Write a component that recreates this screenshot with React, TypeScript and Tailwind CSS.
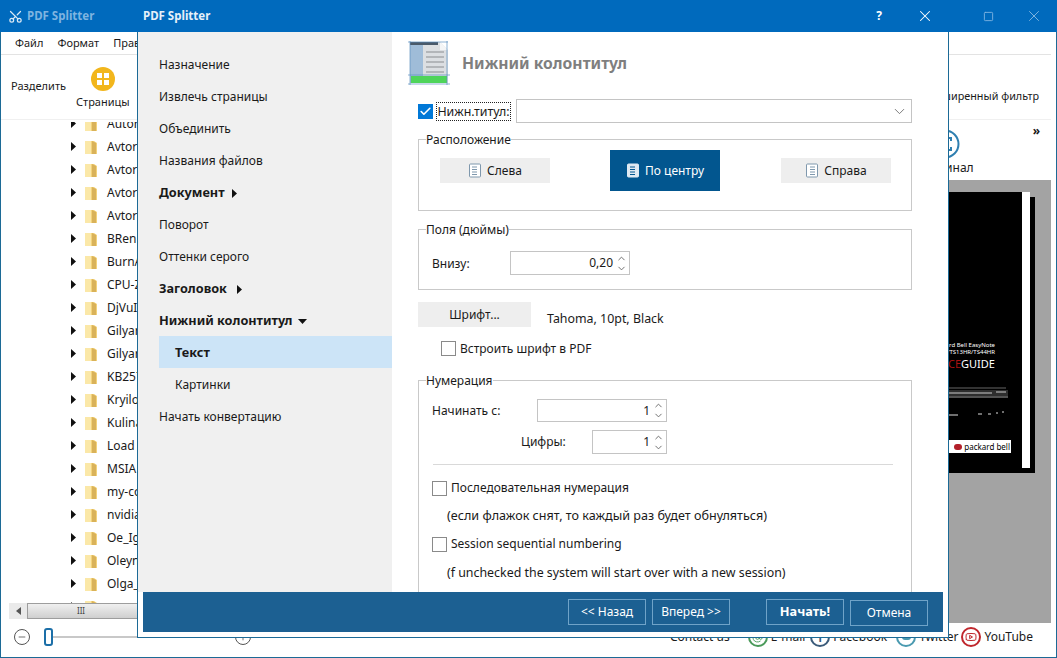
import { ChevronDown, ChevronUp, Check, Scissors, X, Square, Minus, Plus, AtSign, Youtube } from 'lucide-react';

const navTop = ['Назначение', 'Извлечь страницы', 'Объединить', 'Названия файлов'];
const treeRows = ['Autor', 'Avtor', 'Avtor', 'Avtor', 'Avtor', 'BRen', 'BurnA', 'CPU-Z', 'DjVuI', 'Gilyar', 'Gilyar', 'KB257', 'Kryilo', 'Kulina', 'Load', 'MSIA', 'my-co', 'nvidia', 'Oe_Ig', 'Oleyn', 'Olga_', ''];

const Arrow = ({ down = false }: { down?: boolean }) => (
  <svg width="9" height="11" viewBox="0 0 9 11" className={down ? 'shrink-0 rotate-90' : 'shrink-0'}>
    <path d="M2 1l5 4.5L2 10z" fill="#111" />
  </svg>
);

const Folder = () => (
  <svg width="14" height="16" viewBox="0 0 14 16" className="shrink-0">
    <path d="M1 2h9l3 2v11H1z" fill="#f3d27a" />
    <path d="M8 2l4 2v11H8z" fill="#d9b25a" />
    <path d="M1 2h6v13H1z" fill="#fbe8a8" />
  </svg>
);

const DocIcon = ({ light = false, align = 'left' }: { light?: boolean; align?: string }) => {
  const fill = light ? '#dfe9f2' : '#fff';
  const stroke = light ? '#dfe9f2' : '#7f98ad';
  const line = light ? '#02568f' : '#7f98ad';
  const x = align === 'right' ? 5 : 4;
  return (
    <svg width="14" height="15" viewBox="0 0 14 15">
      <rect x="1.5" y="1" width="11" height="13" rx="1" fill={fill} stroke={stroke} />
      <path d={`M${x} 4h5M${x} 6.5h5M${x} 9h5M${x} 11.5h5`} stroke={line} />
    </svg>
  );
};

const CheckBox = ({ checked = false }: { checked?: boolean }) =>
  checked ? (
    <span className="flex h-[15px] w-[15px] items-center justify-center bg-[#0078d7]">
      <Check size={13} color="#fff" strokeWidth={3} />
    </span>
  ) : (
    <span className="block h-[15px] w-[15px] border border-[#8a8a8a] bg-white" />
  );

const Spinner = ({ value, className }: { value: string; className: string }) => (
  <div className={`flex items-center justify-end border border-[#c4c4c4] bg-white pr-[2px] ${className}`}>
    <span>{value}</span>
    <span className="ml-[3px] flex flex-col text-[#666]">
      <ChevronUp size={11} className="-mb-[1px]" />
      <ChevronDown size={11} />
    </span>
  </div>
);

const PosButton = ({ label, active = false, align, className = '' }: { label: string; active?: boolean; align: string; className?: string }) => (
  <button className={`${active ? 'flex h-[41px] w-[110px] items-center justify-center gap-[5px] bg-[#02568f] text-white' : 'flex h-[25px] w-[110px] items-center justify-center gap-[5px] bg-[#eeeeee]'} ${className}`}>
    <DocIcon light={active} align={align} />
    {label}
  </button>
);

const BarButton = ({ label, bold = false, low = false }: { label: string; bold?: boolean; low?: boolean }) => (
  <button className={`h-[26px] w-[78px] border border-[#6fa3c8] text-white ${bold ? 'text-[12.7px] font-bold' : ''} ${low ? 'mt-[2px]' : ''}`}>{label}</button>
);

const Social = ({ color, children, label, className }: { color: string; children: React.ReactNode; label: string; className: string }) => (
  <div className={`flex items-center gap-[3px] ${className}`}>
    <span className="flex h-[20px] w-[20px] items-center justify-center rounded-full border-2" style={{ borderColor: color, color }}>
      {children}
    </span>
    <span>{label}</span>
  </div>
);

const Background = () => (
  <div className="flex h-full flex-col border-x border-b border-[#1c6a96] bg-white">
    <div className="-mx-px flex h-8 shrink-0 items-center justify-between bg-[#006abd] pl-2 text-[11.5px]">
      <div className="flex items-center gap-[4px] font-bold text-[#7fb4e0]">
        <Scissors size={15} color="#dbe9f5" className="-rotate-90" />
        PDF Splitter
      </div>
      <div className="flex items-center gap-[31px] pr-[14px] text-[#7fb4e0]">
        <Square size={11} />
        <X size={18} strokeWidth={1.3} />
      </div>
    </div>
    <div className="mr-[5px] flex h-[23px] shrink-0 items-center gap-[14px] border-b border-[#e3e3e3] pl-[14px] text-[11px]">
      <span>Файл</span>
      <span>Формат</span>
      <span>Правка</span>
    </div>
    <div className="relative z-10 mr-[5px] flex h-[65px] shrink-0 border-b border-[#f0f0f0] bg-white">
      <span className="ml-[10px] mt-[23px] text-[11px]">Разделить</span>
      <div className="ml-[10px] flex flex-col items-center pt-[12px] text-[11px]">
        <span className="grid h-6 w-6 grid-cols-2 gap-[2px] rounded-full bg-[#f2b61c] p-[6px]">
          <i className="bg-white" /><i className="bg-white" /><i className="bg-white" /><i className="bg-white" />
        </span>
        <span className="mt-[3px]">Страницы</span>
      </div>
      <span className="ml-auto mr-[12px] mt-[33px] text-[10.8px]">Расширенный фильтр</span>
    </div>
    <div className="flex min-h-0 flex-1">
      <div className="flex w-[137px] shrink-0 flex-col pl-2">
        <div className="mt-[2px] min-h-0 flex-1 overflow-y-clip">
          <div className="-mt-[10px] pl-[60px]">
            {treeRows.map((name, i) => (
              <div key={i} className="flex h-[23px] items-center whitespace-nowrap text-[12px]">
                <Arrow />
                <span className="ml-[6px]"><Folder /></span>
                <span className="ml-[9px]">{name}</span>
              </div>
            ))}
          </div>
        </div>
        <div className="mb-[4px] flex h-4 shrink-0 items-center bg-[#eaeaea]">
          <span className="flex w-[18px] justify-center"><svg width="5" height="8" viewBox="0 0 5 8"><path d="M5 0L0 4l5 4z" fill="#555" /></svg></span>
          <span className="flex h-4 flex-1 items-center justify-center border border-[#9d9d9d] bg-linear-to-b from-[#f0f0f0] to-[#cfcfcf] pr-[3px] text-[8px] leading-none text-[#444]">III</span>
        </div>
      </div>
      <div className="mr-[5px] flex min-w-0 flex-1 flex-col">
        <div className="flex h-[60px] shrink-0 items-start justify-end">
          <div className="mr-[59px] flex flex-col items-center pt-[9px]">
            <svg width="30" height="30" viewBox="0 0 30 30">
              <circle cx="15" cy="15" r="13.5" fill="none" stroke="#2f7fb0" strokeWidth="2" />
              <path d="M9 12V9h3M18 9h3v3M21 18v3h-3M12 21H9v-3" fill="none" stroke="#2f7fb0" strokeWidth="2" />
            </svg>
            <span className="text-[12px]">Оригинал</span>
          </div>
          <span className="mr-[11px] mt-[2px] font-bold">»</span>
        </div>
        <div className="flex flex-1 justify-end bg-[#a3a3a3] pr-[21px] pt-3">
          <div className="flex h-[276px] w-[230px] flex-col items-end border-r-[8px] border-white bg-black pr-[27px] pt-[150px] text-white shadow-[5px_5px_0_#000]">
            <span className="text-[6px] leading-[7px]">ard Bell EasyNote</span>
            <span className="text-[6px] leading-[7px]">/TS13HR/TS44HR</span>
            <span className="mt-[1px] text-[11px] leading-[14px]"><span className="text-[#a11]">CE</span>GUIDE</span>
            <svg width="62" height="14" viewBox="0 0 62 14" className="-mr-[15px] mt-[16px]">
              <path d="M0 3h60v8H0z" fill="#2e2e2e" />
              <path d="M0 1h58" stroke="#666" />
              <path d="M0 6h44M48 5h10" stroke="#ccc" />
              <path d="M0 10h60" stroke="#777" />
            </svg>
            <svg width="62" height="6" viewBox="0 0 62 6" className="-mr-[15px] mt-[10px]">
              <path d="M0 4h10M30 3h4M40 3h3M48 2h2M54 1h2" stroke="#ddd" />
            </svg>
            <div className="-mr-[16px] mt-[23px] flex h-[13px] w-[62px] items-center justify-end bg-white pr-px text-[8px] leading-none text-black">
              <span className="mr-[2px] h-[6px] w-[8px] rounded-full bg-[#b3202a]" />packard bell
            </div>
          </div>
        </div>
      </div>
    </div>
    <div className="flex h-[34px] shrink-0 items-center pb-[6px] pl-[13px] text-[12px]">
      <span className="flex h-4 w-4 items-center justify-center rounded-full border border-[#555] text-[#555]"><Minus size={10} /></span>
      <span className="ml-[14px] h-[18px] w-[9px] rounded-[3px] border-2 border-[#1c6fa8]" />
      <span className="h-[2px] w-[182px] bg-[#c8c8c8]" />
      <span className="flex h-4 w-4 items-center justify-center rounded-full border border-[#555] text-[#555]"><Plus size={10} /></span>
      <span className="ml-auto">Contact us</span>
      <Social color="#4a9a5a" label="E-mail" className="ml-[18px]"><AtSign size={11} /></Social>
      <Social color="#3b5b7a" label="Facebook" className="ml-[5px]"><span className="text-[11px] font-bold leading-none">f</span></Social>
      <Social color="#4a9ab0" label="Twitter" className="ml-[9px]"><span className="h-[6px] w-[9px] rounded-full bg-[#4a9ab0]" /></Social>
      <Social color="#c0272d" label="YouTube" className="ml-[3px] mr-[23px]"><Youtube size={12} /></Social>
    </div>
  </div>
);

const navRow = 'flex h-8 items-center pl-[21px] pt-[2px]';
const navBold = 'flex h-8 items-center pl-[21px] pt-[2px] text-[12.7px] font-bold';

const Dialog = () => (
  <div className="absolute left-[137px] top-0 z-20 flex h-[638px] w-[812px] flex-col border-x border-b border-[#1c6a96] bg-white">
    <div className="-mx-px flex h-8 shrink-0 items-center justify-between bg-[#006abd] pl-[6px] pr-[15px] text-[11.5px] font-bold text-[#e6f0f9]">
      PDF Splitter
      <div className="flex items-center gap-[34px] text-[12px] font-normal text-white">
        <span className="font-bold">?</span>
        <X size={18} strokeWidth={1.4} />
      </div>
    </div>
    <div className="flex min-h-0 flex-1">
      <div className="w-[254px] shrink-0 bg-[#f0f0f0] pt-4">
        {navTop.map((t) => (
          <div key={t} className={navRow}>{t}</div>
        ))}
        <div className={`${navBold} gap-[5px]`}>Документ <Arrow /></div>
        <div className={navRow}>Поворот</div>
        <div className={navRow}>Оттенки серого</div>
        <div className={`${navBold} gap-[8px]`}>Заголовок <Arrow /></div>
        <div className={`${navBold} gap-[6px]`}>Нижний колонтитул <Arrow down /></div>
        <div className="ml-[21px] flex h-8 items-center bg-[#cce4f7] pl-4 pt-[2px] text-[12.7px] font-bold">Текст</div>
        <div className="ml-[21px] flex h-8 items-center pl-4 pt-[2px]">Картинки</div>
        <div className={navRow}>Начать конвертацию</div>
      </div>
      <div className="min-w-0 flex-1 overflow-hidden pl-[26px] pt-2">
        <div className="-ml-[10px] flex h-[47px] items-center">
          <svg width="44" height="47" viewBox="0 0 44 47">
            <path d="M2 2h30l8 8v33H2z" fill="#dcdfe2" />
            <path d="M2 2h13v41H2z" fill="#9fbcd8" />
            <path d="M2 2h28v3H2z" fill="#4a5a6a" />
            <path d="M32 2v8h8z" fill="#f4f5f6" />
            <path d="M18 12h18M18 17h18M18 22h18M18 27h18M18 32h18" stroke="#b3b6b9" strokeWidth="2" />
            <path d="M3 36h36v7H3z" fill="#4fd45a" />
            <path d="M2 1v44M0 35h42M0 44h42M39 1v44M0 2h40" stroke="#5d8fbe" strokeWidth="0.7" fill="none" />
          </svg>
          <span className="ml-[10px] text-[15.7px] font-bold text-[#7f7f7f]">Нижний колонтитул</span>
        </div>
        <div className="mt-3 flex h-6 w-[494px] items-center">
          <CheckBox checked />
          <span className="ml-[3px] w-[75px] whitespace-nowrap border border-dotted border-[#222] text-center text-[12.4px] leading-[17px]">Нижн.титул:</span>
          <div className="ml-[5px] flex h-6 flex-1 items-center justify-end border border-[#c4c4c4] pr-[3px] text-[#666]">
            <ChevronDown size={17} strokeWidth={1.2} />
          </div>
        </div>

        <fieldset className="mt-2 h-[80px] w-[494px] border border-[#c9c9c9]">
          <legend className="ml-[7px] h-4 pt-px leading-4">Расположение</legend>
          <div className="flex items-center pl-[21px] pt-[3px]">
            <PosButton label="Слева" align="left" />
            <PosButton label="По центру" active align="center" className="ml-[60px]" />
            <PosButton label="Справа" align="right" className="ml-[61px]" />
          </div>
        </fieldset>

        <fieldset className="mt-[10px] h-[69px] w-[494px] border border-[#c9c9c9]">
          <legend className="ml-[7px] h-4 pt-px leading-4">Поля (дюймы)</legend>
          <div className="flex items-center pl-[13px] pt-[14px]">
            <span className="w-[78px] pt-px">Внизу:</span>
            <Spinner value="0,20" className="h-6 w-[120px]" />
          </div>
        </fieldset>

        <div className="mt-3 flex h-[25px]">
          <button className="h-[25px] w-[113px] bg-[#eeeeee]">Шрифт...</button>
          <span className="ml-4 mt-[8px] text-[12.4px]">Tahoma, 10pt, Black</span>
        </div>
        <div className="ml-[23px] mt-[14px] flex h-[15px] items-center gap-[4px]">
          <CheckBox />
          Встроить шрифт в PDF
        </div>

        <fieldset className="mt-[16px] h-[240px] w-[494px] border border-[#c9c9c9]">
          <legend className="ml-[7px] h-4 pt-px leading-4">Нумерация</legend>
          <div className="pl-[13px] pt-[11px]">
            <div className="flex items-center">
              <span className="w-[105px]">Начинать с:</span>
              <Spinner value="1" className="h-[23px] w-[130px]" />
            </div>
            <div className="mt-2 flex items-center pl-[89px]">
              <span className="w-[71px]">Цифры:</span>
              <Spinner value="1" className="h-6 w-[75px]" />
            </div>
            <div className="ml-px mt-[10px] w-[460px] border-t border-[#d9d9d9]" />
            <div className="mt-[9px] flex h-7 items-center gap-[4px]"><CheckBox />Последовательная нумерация</div>
            <div className="flex h-7 items-center pl-[15px] text-[12.6px]">(если флажок снят, то каждый раз будет обнуляться)</div>
            <div className="flex h-7 items-center gap-[4px]"><CheckBox />Session sequential numbering</div>
            <div className="flex h-7 items-center pl-[15px] pt-[2px] text-[12.4px]">(f unchecked the system will start over with a new session)</div>
          </div>
        </fieldset>
      </div>
    </div>
    <div className="shrink-0 px-[5px] pb-[5px]">
      <div className="flex h-10 items-center justify-end bg-[#1c6092] pr-[15px]">
        <BarButton label="<< Назад" />
        <span className="ml-[6px]"><BarButton label="Вперед >>" /></span>
        <span className="ml-[36px]"><BarButton label="Начать!" bold /></span>
        <span className="ml-[6px]"><BarButton label="Отмена" low /></span>
      </div>
    </div>
  </div>
);

export default function App() {
  return (
    <div className="relative h-[658px] w-[1057px] overflow-hidden bg-white text-[12px] text-[#1a1a1a] [font-family:'Noto_Sans',sans-serif]">
      <Background />
      <Dialog />
    </div>
  );
}
